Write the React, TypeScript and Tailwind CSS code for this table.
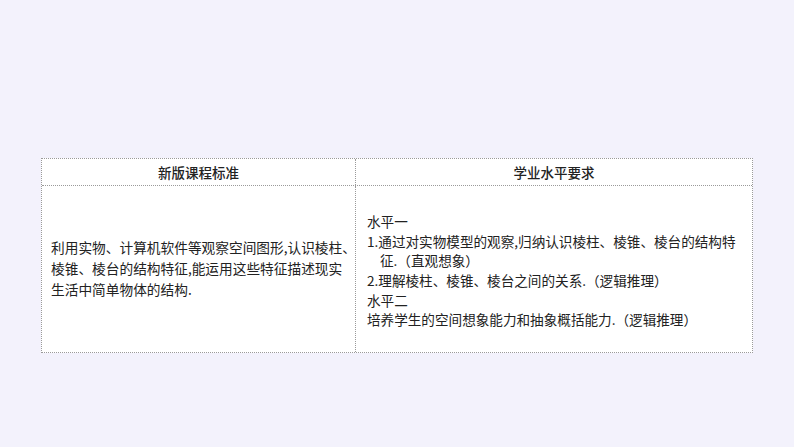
export default function App() {
    const font = { fontFamily: '"Noto Sans CJK SC", "Noto Sans", sans-serif' };

    return (
        <div className="w-[794px] h-[447px] bg-[#f3f2fc] pt-[158px] pl-[41px]" style={font}>
            {/* Table */}
            <div className="w-[712px] bg-white border border-dotted border-[#9a9a9a] text-[#222]">
                {/* Header row */}
                <div className="grid grid-cols-[314px_396px] h-[27px] border-b border-dotted border-[#9a9a9a]">
                    <div className="flex items-center justify-center border-r border-dotted border-[#9a9a9a] text-[13.5px] font-medium">
                        新版课程标准
                    </div>
                    <div className="flex items-center justify-center text-[13.5px] font-medium">
                        学业水平要求
                    </div>
                </div>

                {/* Body row */}
                <div className="grid grid-cols-[314px_396px] h-[166px]">
                    <div className="flex flex-col justify-center pl-[9px] border-r border-dotted border-[#9a9a9a] text-[13.7px] leading-[21px] whitespace-nowrap pb-[2px]">
                        <div>利用实物、计算机软件等观察空间图形,认识棱柱、</div>
                        <div>棱锥、棱台的结构特征,能运用这些特征描述现实</div>
                        <div>生活中简单物体的结构.</div>
                    </div>
                    <div className="flex flex-col justify-center pl-[11px] text-[13.6px] leading-[19.7px] whitespace-nowrap pt-[4px]">
                        <div>水平一</div>
                        <div>1.通过对实物模型的观察,归纳认识棱柱、棱锥、棱台的结构特</div>
                        <div className="pl-[13px]">征.（直观想象）</div>
                        <div>2.理解棱柱、棱锥、棱台之间的关系.（逻辑推理）</div>
                        <div>水平二</div>
                        <div>培养学生的空间想象能力和抽象概括能力.（逻辑推理）</div>
                    </div>
                </div>
            </div>
        </div>
    );
}
